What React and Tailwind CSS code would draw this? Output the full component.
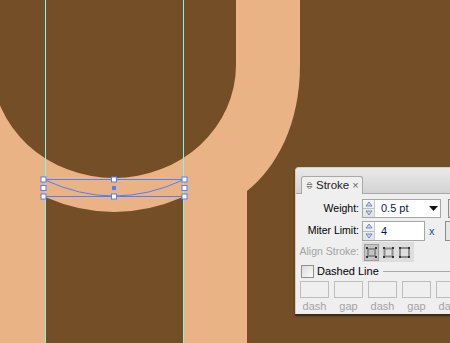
import React from "react";

const FONT = { fontFamily: '"Liberation Sans", Arial, sans-serif' };

function Spinner() {
  return (
    <div className="flex w-[12px] flex-col border-r border-[#c9c9c9] bg-gradient-to-b from-[#f7f7f7] to-[#e3e3e3]">
      <div className="flex flex-1 items-center justify-center border-b border-[#bdbdbd]">
        <svg width="8" height="6" viewBox="0 0 8 6">
          <path d="M1 5 L4 1 L7 5 Z" fill="#c9d6f2" stroke="#5b79c0" strokeWidth="0.8" />
        </svg>
      </div>
      <div className="flex flex-1 items-center justify-center">
        <svg width="8" height="6" viewBox="0 0 8 6">
          <path d="M1 1 L4 5 L7 1 Z" fill="#c9d6f2" stroke="#5b79c0" strokeWidth="0.8" />
        </svg>
      </div>
    </div>
  );
}

function AlignIcon({ pressed, variant }) {
  return (
    <div
      className={
        "flex h-[17px] w-[16px] items-center justify-center " +
        (pressed ? "bg-[#c4c4c4] border border-[#9d9d9d]" : "")
      }
    >
      <svg width="13" height="13" viewBox="0 0 13 13">
        <rect
          x={variant === 0 ? 3 : variant === 1 ? 2.5 : 2}
          y={variant === 0 ? 3 : variant === 1 ? 2.5 : 2}
          width={variant === 0 ? 7 : variant === 1 ? 8 : 9}
          height={variant === 0 ? 7 : variant === 1 ? 8 : 9}
          fill="none"
          stroke="#8c8c8c"
          strokeWidth="2"
        />
        <rect x="1" y="1" width="2" height="2" fill="#333" />
        <rect x="10" y="1" width="2" height="2" fill="#333" />
        <rect x="1" y="10" width="2" height="2" fill="#333" />
        <rect x="10" y="10" width="2" height="2" fill="#333" />
      </svg>
    </div>
  );
}

function Handle({ x, y }) {
  return <rect x={x - 2.5} y={y - 2.5} width="5" height="5" fill="#ffffff" stroke="#4f7fff" strokeWidth="1" />;
}

export default function App() {
  return (
    <div className="relative h-[343px] w-[450px] overflow-hidden bg-[#744e26]" style={FONT}>
      <svg className="absolute inset-0" width="450" height="343" viewBox="0 0 450 343">
        <rect width="450" height="343" fill="#744e26" />
        <path d="M-5,-5 H300 V65 C300,125 276,168 247,191 V348 H-5 Z" fill="#e9b386" />
        <path d="M-8,-5 H236 V65 A122 113 0 0 1 -8 65 Z" fill="#744e26" />
        <path d="M45,197 Q114,227 183,197 V348 H45 Z" fill="#744e26" />
        <line x1="45.5" y1="0" x2="45.5" y2="343" stroke="#86f2ee" strokeWidth="1" />
        <line x1="183.5" y1="0" x2="183.5" y2="343" stroke="#86f2ee" strokeWidth="1" />
        <line x1="43.5" y1="179.5" x2="184.5" y2="179.5" stroke="#4f7fff" strokeWidth="1" />
        <line x1="43.5" y1="196.5" x2="184.5" y2="196.5" stroke="#4f7fff" strokeWidth="1" />
        <path d="M45,180 Q114,212 183,180" fill="none" stroke="#4f7fff" strokeWidth="1" />
        <Handle x={43.5} y={179.5} />
        <Handle x={114} y={179.5} />
        <Handle x={184.5} y={179.5} />
        <Handle x={43.5} y={188} />
        <Handle x={184.5} y={188} />
        <Handle x={43.5} y={196.5} />
        <Handle x={114} y={196.5} />
        <Handle x={184.5} y={196.5} />
        <rect x="112" y="186" width="4" height="4" fill="#4f7fff" />
      </svg>

      <div className="absolute left-[295px] top-[167px] flex h-[147px] w-[165px] flex-col rounded-tl-[4px] border-l border-t border-[#cfcfcf] bg-[#efefef] shadow-[0_2px_2px_rgba(0,0,0,0.55)]">
        <div className="flex h-[26px] items-end rounded-tl-[4px] border-b border-[#a8a8a8] bg-gradient-to-b from-[#e9e9e9] to-[#d3d3d3] pl-[5px]">
          <div className="-mb-px flex h-[18px] w-[62px] items-center gap-[3px] rounded-t-[3px] border border-b-0 border-[#a8a8a8] bg-[#efefef] pl-[4px] text-[11.5px] text-[#222]">
            <svg width="7" height="9" viewBox="0 0 7 9">
              <path d="M1 3.5 L3.5 1 L6 3.5 Z M1 5.5 L3.5 8 L6 5.5 Z" fill="none" stroke="#666" strokeWidth="0.8" />
            </svg>
            <span className="leading-none">Stroke</span>
            <span className="text-[11px] leading-none text-[#666]">×</span>
          </div>
        </div>

        <div className="flex flex-col pt-[5px] text-[10.5px]">
          <div className="flex h-[19px] items-center">
            <div className="w-[63px] text-right text-black">Weight:</div>
            <div className="ml-[3px] flex h-[19px] w-[79px] border border-[#a6a6a6] bg-white">
              <Spinner />
              <div className="flex flex-1 items-center pl-[6px] text-[11px] text-[#0b1a44]">0.5 pt</div>
              <div className="flex w-[14px] items-center justify-center">
                <svg width="9" height="5" viewBox="0 0 9 5">
                  <path d="M0 0 H9 L4.5 5 Z" fill="#111" />
                </svg>
              </div>
            </div>
            <div className="ml-[7px] h-[19px] w-[10px] border border-[#8d8d8d] bg-[#e6e6e6]" />
          </div>

          <div className="mt-[3px] flex h-[20px] items-center">
            <div className="w-[63px] text-right text-black">Miter Limit:</div>
            <div className="ml-[3px] flex h-[20px] w-[63px] border border-[#a6a6a6] bg-white">
              <Spinner />
              <div className="flex flex-1 items-center pl-[6px] text-[11px] text-[#0b1a44]">4</div>
            </div>
            <div className="ml-[4px] w-[12px] text-[11px] text-[#2a4a9a]">x</div>
            <div className="ml-[4px] h-[20px] w-[10px] border border-[#8d8d8d] bg-[#e6e6e6]" />
          </div>

          <div className="mt-[1px] flex h-[20px] items-center">
            <div className="w-[63px] text-right text-[#a3a3a3]">Align Stroke:</div>
            <div className="ml-[3px] flex h-[20px] w-[52px] items-center gap-px border border-[#dcdcdc] bg-[#dedede] px-[1px]">
              <AlignIcon pressed variant={0} />
              <AlignIcon variant={1} />
              <AlignIcon variant={2} />
            </div>
          </div>

          <div className="mt-[3px] flex h-[13px] items-center pl-[5px]">
            <div className="h-[13px] w-[13px] border border-[#8f8f8f] bg-gradient-to-br from-[#dcdcdc] to-[#fbfbfb]" />
            <span className="ml-[3px] text-[11px] text-black">Dashed Line</span>
            <div className="ml-[4px] h-px flex-1 bg-[#a8a8a8]" />
          </div>

          <div className="mt-[3px] flex h-[17px] gap-[5px] pl-[4px]">
            <div className="h-[17px] w-[29px] shrink-0 border border-[#bdbdbd] bg-[#efefef]" />
            <div className="h-[17px] w-[29px] shrink-0 border border-[#bdbdbd] bg-[#efefef]" />
            <div className="h-[17px] w-[29px] shrink-0 border border-[#bdbdbd] bg-[#efefef]" />
            <div className="h-[17px] w-[29px] shrink-0 border border-[#bdbdbd] bg-[#efefef]" />
            <div className="h-[17px] w-[29px] shrink-0 border border-[#bdbdbd] bg-[#efefef]" />
          </div>

          <div className="mt-[2px] flex gap-[5px] pl-[4px] text-[11px] leading-[12px] text-[#a3a3a3]">
            <div className="w-[29px] shrink-0 text-center">dash</div>
            <div className="w-[29px] shrink-0 text-center">gap</div>
            <div className="w-[29px] shrink-0 text-center">dash</div>
            <div className="w-[29px] shrink-0 text-center">gap</div>
            <div className="w-[29px] shrink-0 text-center">dash</div>
          </div>
        </div>
      </div>
    </div>
  );
}
